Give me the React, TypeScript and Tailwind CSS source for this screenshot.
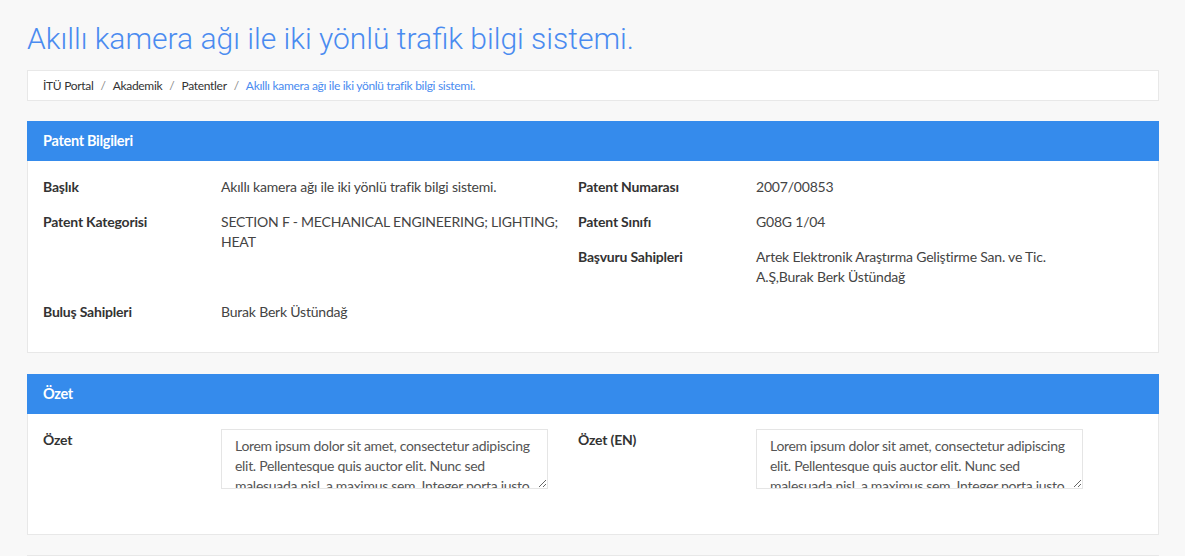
import React from "react";

const lorem =
  "Lorem ipsum dolor sit amet, consectetur adipiscing elit. Pellentesque quis auctor elit. Nunc sed malesuada nisl, a maximus sem. Integer porta justo at elit tincidunt, vel faucibus nunc pulvinar. Donec commodo lacus nec leo ultrices.";

function Field({ label, children, className = "" }: { label: string; children: React.ReactNode; className?: string }) {
  return (
    <div className={"flex items-start mb-[15px] " + className}>
      <div className="w-[178px] shrink-0 font-bold text-[#333]">{label}</div>
      <div className="w-[340px] text-[#444]">{children}</div>
    </div>
  );
}

function Card({ title, children, className = "" }: { title: string; children: React.ReactNode; className?: string }) {
  return (
    <div className={"bg-white border border-[#e8e8e8] " + className}>
      <div className="h-[40px] -mx-px -mt-px bg-[#358bec] flex items-center px-4 text-white font-bold text-[14.5px] tracking-[-0.3px]">
        {title}
      </div>
      {children}
    </div>
  );
}

function Area() {
  return (
    <textarea
      readOnly
      value={lorem}
      className="w-[327px] h-[60px] border border-[#e5e5e5] pl-[13px] pr-[4px] py-[6px] text-[#555] text-[14px] leading-[20px] tracking-[-0.3px] outline-none resize-y overflow-hidden"
      style={{ fontFamily: "'Lato', 'Noto Sans', sans-serif" }}
    />
  );
}

export default function App() {
  return (
    <div
      className="min-h-screen bg-[#f8f8f8] text-[14px] leading-[20px] text-[#333] tracking-[-0.2px]"
      style={{ fontFamily: "'Lato', 'Noto Sans', sans-serif" }}
    >
      <div className="w-[1132px] ml-[27px]">
        <h1
          className="pt-[21px] pb-[13px] text-[30px] leading-[36px] font-light text-[#4a8bf0] tracking-normal"
          style={{ fontFamily: "Roboto, sans-serif" }}
        >
          Akıllı kamera ağı ile iki yönlü trafik bilgi sistemi.
        </h1>
        <div className="h-[31px] bg-white border border-[#e8e8e8] flex items-center px-[15px] text-[12px] tracking-[-0.3px] text-[#333]">
          <span>İTÜ Portal</span>
          <span className="mx-[7px] text-[#888]">/</span>
          <span>Akademik</span>
          <span className="mx-[7px] text-[#888]">/</span>
          <span>Patentler</span>
          <span className="mx-[7px] text-[#888]">/</span>
          <span className="text-[#4a8bf0]">Akıllı kamera ağı ile iki yönlü trafik bilgi sistemi.</span>
        </div>

        <Card title="Patent Bilgileri" className="mt-[20px]">
          <div className="grid grid-cols-[535px_1fr] px-[15px] pt-[16px] pb-[15px]">
            <Field label="Başlık" className="col-start-1 row-start-1">
              Akıllı kamera ağı ile iki yönlü trafik bilgi sistemi.
            </Field>
            <Field label="Patent Numarası" className="col-start-2 row-start-1">
              2007/00853
            </Field>
            <Field label="Patent Kategorisi" className="col-start-1 row-start-2 row-span-2">
              SECTION F - MECHANICAL ENGINEERING; LIGHTING; HEAT
            </Field>
            <Field label="Patent Sınıfı" className="col-start-2 row-start-2">
              G08G 1/04
            </Field>
            <Field label="Başvuru Sahipleri" className="col-start-2 row-start-3">
              Artek Elektronik Araştırma Geliştirme San. ve Tic. A.Ş,Burak Berk Üstündağ
            </Field>
            <Field label="Buluş Sahipleri" className="col-start-1 row-start-4">
              Burak Berk Üstündağ
            </Field>
          </div>
        </Card>

        <Card title="Özet" className="mt-[21px]">
          <div className="grid grid-cols-[535px_1fr] px-[15px] pt-[15px] pb-[45px]">
            <div className="flex items-start">
              <div className="w-[178px] shrink-0 font-bold text-[#333] pt-[1px]">Özet</div>
              <Area />
            </div>
            <div className="flex items-start">
              <div className="w-[178px] shrink-0 font-bold text-[#333] pt-[1px]">Özet (EN)</div>
              <Area />
            </div>
          </div>
        </Card>

        <div className="mt-[20px] h-[40px] bg-white border border-[#e8e8e8]" />
      </div>
    </div>
  );
}
